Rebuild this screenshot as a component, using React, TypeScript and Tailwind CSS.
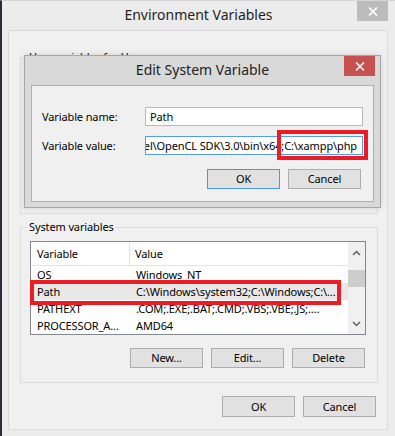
import { type ReactNode } from "react";

function CloseX() {
  return (
    <svg width="10" height="9" viewBox="0 0 10 9" fill="none" stroke="white" strokeWidth="1.6" aria-hidden="true">
      <path d="M1 0.5l8 8M9 0.5l-8 8" />
    </svg>
  );
}

function Chevron({ down = false }: { down?: boolean }) {
  return (
    <svg width="9" height="6" viewBox="0 0 9 6" fill="none" stroke="#606060" strokeWidth="1.5" aria-hidden="true">
      <path d={down ? "M1 1l3.5 3.5L8 1" : "M1 5l3.5-3.5L8 5"} />
    </svg>
  );
}

function WinButton({
  children,
  primary = false,
  tall = false,
}: {
  children: ReactNode;
  primary?: boolean;
  tall?: boolean;
}) {
  return (
    <div
      className={
        "flex w-[73px] items-center justify-center border bg-[#e1e1e1] " +
        (tall ? "h-[21px] " : "h-[20px] ") +
        (primary ? "border-[#4a98e0]" : "border-[#adadad]")
      }
    >
      {children}
    </div>
  );
}

const rows = [
  { name: "OS", value: "Windows_NT" },
  { name: "Path", value: "C:\\Windows\\system32;C:\\Windows;C:\\...", selected: true },
  { name: "PATHEXT", value: ".COM;.EXE;.BAT;.CMD;.VBS;.VBE;.JS;...." },
  { name: "PROCESSOR_A...", value: "AMD64" },
];

export default function App() {
  return (
    <div className="relative h-[436px] w-[395px] overflow-hidden border-l-2 border-t border-l-[#2c2c3a] border-t-[#d6d6d6] bg-[#ececec] font-['Noto_Sans',sans-serif] text-[11px] leading-[16px] tracking-[-0.12px] text-black">
      {/* title bar */}
      <div className="relative flex h-[29px] items-center justify-center pb-[2px]">
        <span className="text-[14px] tracking-normal text-[#1e1e1e]">Environment Variables</span>
        <div className="absolute right-[7px] top-0 flex h-[20px] w-[31px] items-center justify-center bg-[#bcbcbc]">
          <CloseX />
        </div>
      </div>

      {/* client area */}
      <div className="ml-[6px] flex h-[400px] w-[380px] flex-col border border-[#dadada] bg-[#f0f0f0]">
        <fieldset className="ml-[11px] mt-[18px] h-[165px] w-[358px] border border-[#dcdcdc]">
          <legend className="ml-[7px] px-[1px]">User variables for User</legend>
        </fieldset>

        <fieldset className="ml-[11px] mt-[5px] flex h-[164px] w-[358px] flex-col border border-[#dcdcdc]">
          <legend className="ml-[7px] px-[1px]">System variables</legend>

          <div className="ml-[9px] mt-[6px] flex h-[94px] w-[336px] border border-[#828790] bg-white">
            <div className="flex flex-1 flex-col">
              <div className="flex h-[24px] items-center border-b border-[#e5e5e5]">
                <div className="flex h-full w-[99px] items-center border-r border-[#e5e5e5] pl-[6px]">Variable</div>
                <div className="pl-[5px]">Value</div>
              </div>
              {rows.map((r) => (
                <div key={r.name} className={"flex h-[17px] items-center " + (r.selected ? "bg-[#e8e8e8]" : "")}>
                  <div className="w-[100px] whitespace-nowrap pl-[6px]">{r.name}</div>
                  <div className="whitespace-nowrap pl-[5px]">{r.value}</div>
                </div>
              ))}
            </div>
            <div className="flex w-[17px] flex-col bg-[#f0f0f0]">
              <div className="flex h-[20px] items-center justify-center pt-[1px]">
                <Chevron />
              </div>
              <div className="mt-[8px] h-[17px] bg-[#cdcdcd]" />
              <div className="flex-1" />
              <div className="flex h-[20px] items-center justify-center">
                <Chevron down />
              </div>
            </div>
          </div>

          <div className="mt-[13px] flex justify-end gap-[8px] pr-[12px]">
            <WinButton>New...</WinButton>
            <WinButton>Edit...</WinButton>
            <WinButton>Delete</WinButton>
          </div>
        </fieldset>

        <div className="mt-[13px] flex justify-end gap-[8px] pr-[11px]">
          <WinButton tall>OK</WinButton>
          <WinButton tall>Cancel</WinButton>
        </div>
      </div>

      {/* Edit System Variable dialog on top */}
      <div className="absolute left-[22px] top-[54px] flex h-[153px] w-[357px] flex-col border border-[#a6a6a6] bg-[#d9d9d9] shadow-[0_0_6px_rgba(0,0,0,0.12)]">
        <div className="relative flex h-[29px] items-center justify-center pb-[2px]">
          <span className="text-[14px] tracking-normal text-[#1e1e1e]">Edit System Variable</span>
          <div className="absolute right-[5px] top-0 flex h-[20px] w-[31px] items-center justify-center bg-[#c75050]">
            <CloseX />
          </div>
        </div>
        <div className="mx-[6px] flex h-[117px] flex-col border border-[#b0b0b0] bg-[#f0f0f0] pt-[21px]">
          <div className="flex h-[19px] items-center">
            <div className="w-[113px] pl-[10px]">Variable name:</div>
            <div className="flex h-[19px] w-[218px] items-center border border-[#b9b9b9] bg-white pl-[4px]">Path</div>
          </div>
          <div className="mt-[10px] flex h-[19px] items-center">
            <div className="w-[113px] pl-[10px]">Variable value:</div>
            <div className="flex h-[19px] w-[218px] items-center justify-end overflow-hidden whitespace-nowrap border border-[#569de5] bg-white pr-[5px]">
              <span>el\OpenCL SDK\3.0\bin\x64;C:\xa</span>
              <span className="inline-block h-[13px] w-px bg-black" />
              <span>mpp\php</span>
            </div>
          </div>
          <div className="mt-[14px] flex justify-end gap-[8px] pr-[12px]">
            <WinButton primary>OK</WinButton>
            <WinButton>Cancel</WinButton>
          </div>
        </div>
      </div>

      {/* red annotation boxes */}
      <div className="absolute left-[275px] top-[129px] h-[30px] w-[91px] border-4 border-[#ed1c24]" />
      <div className="absolute left-[28px] top-[279px] h-[25px] w-[311px] border-4 border-[#ed1c24]" />
    </div>
  );
}
